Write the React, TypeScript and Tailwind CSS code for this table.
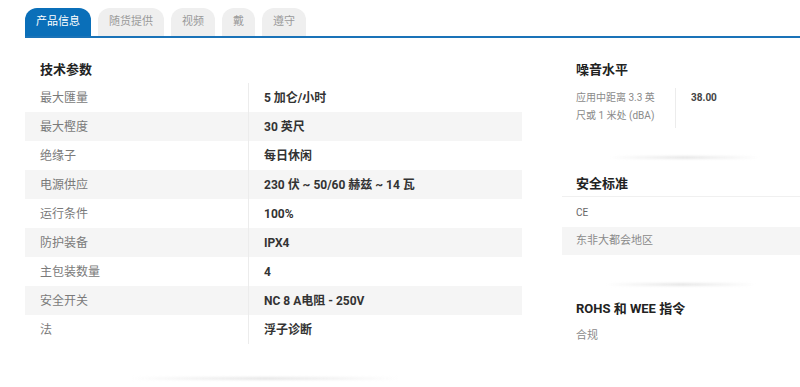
import React from 'react';

type Spec = {
  label: string;
  value: string;
};

const specs: Spec[] = [
  { label: '最大匯量', value: '5 加仑/小时' },
  { label: '最大樫度', value: '30 英尺' },
  { label: '绝缘子', value: '每日休闲' },
  { label: '电源供应', value: '230 伏 ~ 50/60 赫兹 ~ 14 瓦' },
  { label: '运行条件', value: '100%' },
  { label: '防护装备', value: 'IPX4' },
  { label: '主包装数量', value: '4' },
  { label: '安全开关', value: 'NC 8 A电阻 - 250V' },
  { label: '法', value: '浮子诊断' },
];

const tabs = ['产品信息', '随货提供', '视频', '戴', '遵守'];

const Separator: React.FC<{ className?: string }> = ({ className }) => (
  <div className={`h-[3px] bg-linear-to-r from-transparent via-[#e6e6e6] to-transparent blur-[1px] ${className ?? ''}`} />
);

const App: React.FC = () => {
  return (
    <div className="w-[800px] h-[387px] bg-white overflow-hidden font-['Roboto','Noto_Sans_CJK_SC',sans-serif] text-[#333]">
      <div className="pl-[25px] pt-[8px]">
        {/* tabs */}
        <div className="flex gap-[7px] items-end">
          {tabs.map((tab, i) => (
            <div
              key={tab}
              className={`h-[28px] px-[11px] flex items-center rounded-t-[12px] text-[11px] ${
                i === 0 ? 'bg-[#0a6fb9] text-white' : 'bg-[#efefef] text-[#9a9a9a]'
              }`}
            >
              {tab}
            </div>
          ))}
        </div>
        <div className="h-[2px] bg-[#1a73b8]" />

        <div className="flex">
          {/* technical specs */}
          <div className="w-[497px]">
            <h3 className="pl-[15px] pt-[25px] pb-[7px] text-[13px] font-bold text-[#222] leading-[13px]">技术参数</h3>
            <div>
              {specs.map((s, i) => (
                <div key={i} className={`flex h-[29px] text-[12px] ${i % 2 === 1 ? 'bg-[#f5f5f5]' : 'bg-white'}`}>
                  <div className="w-[223px] pl-[15px] flex items-center text-[#7a7a7a]">{s.label}</div>
                  <div className="flex-1 border-l border-[#ececec] pl-[15px] flex items-center font-bold text-[#333]">
                    {s.value}
                  </div>
                </div>
              ))}
            </div>
            <Separator className="w-[270px] ml-[105px] mt-[33px]" />
          </div>

          {/* side column */}
          <div className="ml-[40px] w-[238px]">
            <h3 className="pl-[14px] pt-[25px] text-[13px] font-bold text-[#222] leading-[13px]">噪音水平</h3>
            <div className="flex mt-[12px]">
              <div className="w-[113px] pl-[14px] pr-[14px] py-[1px] text-[10px] leading-[18px] text-[#8a8a8a]">
                应用中距离 3.3 英尺或 1 米处 (dBA)
              </div>
              <div className="border-l border-[#ececec] pl-[15px] pt-[2px] text-[10px] font-bold text-[#444] h-[40px]">
                38.00
              </div>
            </div>
            <Separator className="w-[150px] ml-[48px] mt-[28px]" />

            <h3 className="pl-[14px] pt-[18px] pb-[6px] text-[13px] font-bold text-[#222] leading-[13px]">安全标准</h3>
            <div className="h-[31px] pl-[14px] flex items-center text-[10px] text-[#666] border-t border-[#f0f0f0] bg-white">CE</div>
            <div className="h-[28px] pl-[14px] flex items-center text-[11px] text-[#8a8a8a] bg-[#f5f5f5]">东非大都会地区</div>
            <Separator className="w-[150px] ml-[44px] mt-[28px]" />

            <h3 className="pl-[14px] pt-[16px] text-[13px] font-bold text-[#222] leading-[13px]">ROHS 和 WEE 指令</h3>
            <div className="pl-[14px] pt-[13px] text-[11px] text-[#8a8a8a]">合规</div>
          </div>
        </div>
      </div>
    </div>
  );
};

export default App;
